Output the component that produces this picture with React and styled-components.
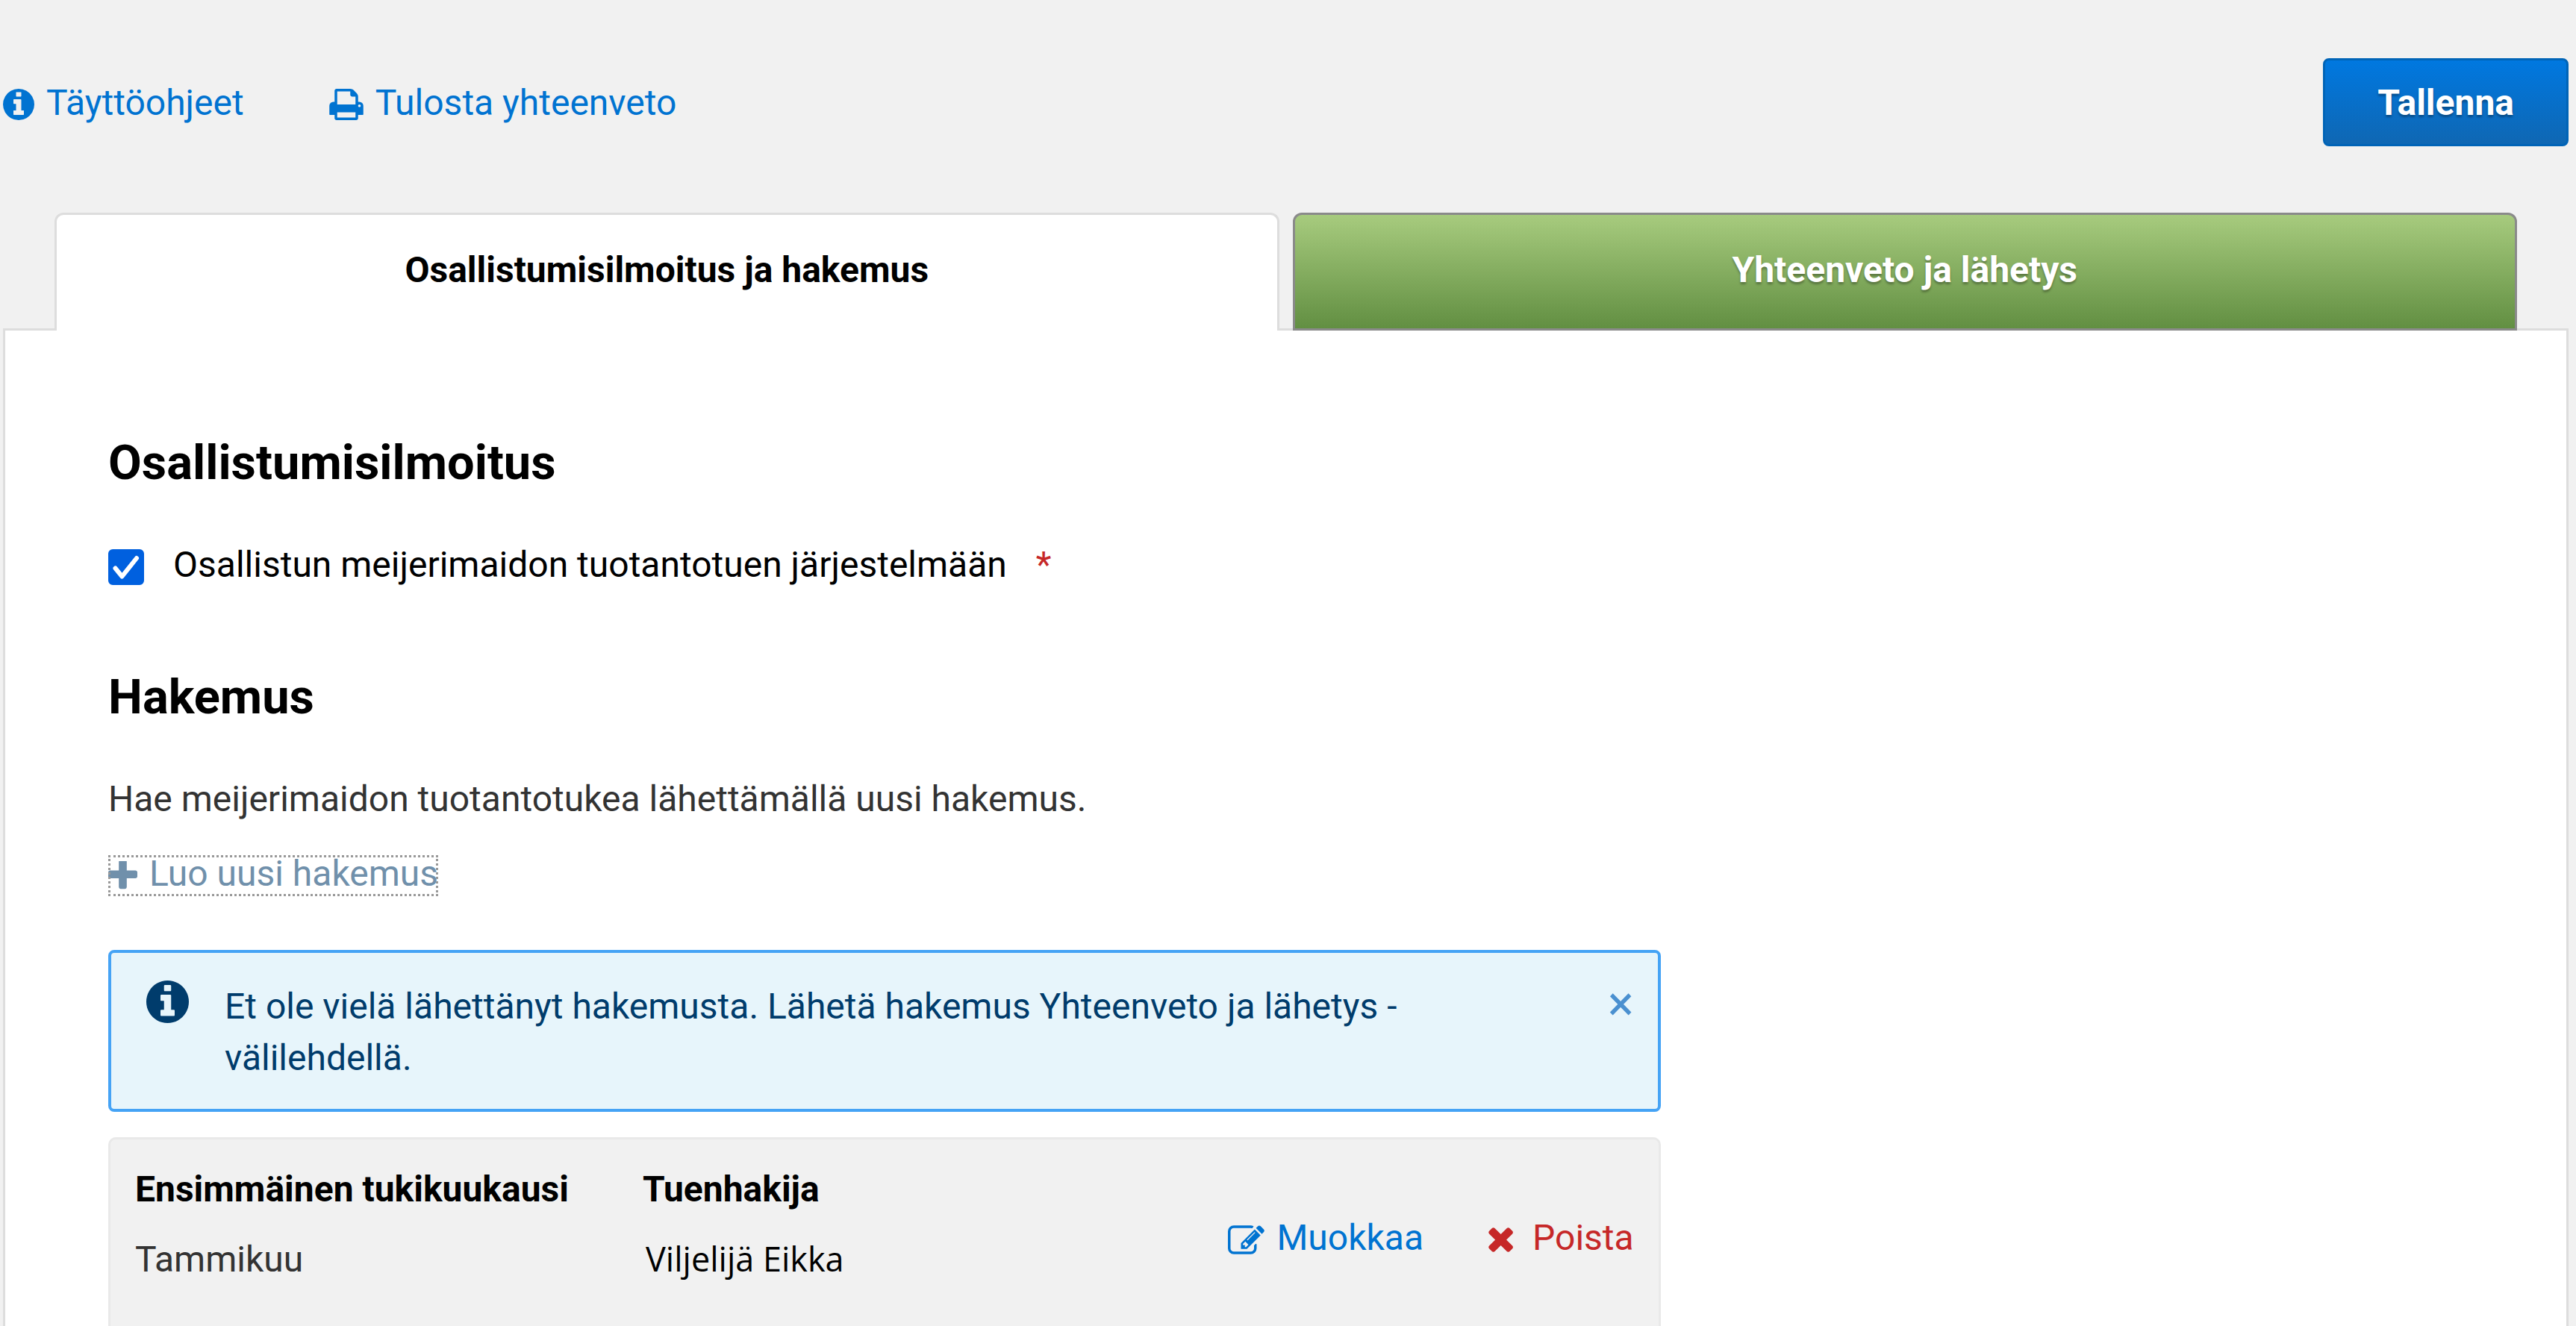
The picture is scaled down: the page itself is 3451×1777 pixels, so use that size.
import React, { useState } from 'react';
import styled, { createGlobalStyle, css } from 'styled-components';

const GlobalStyle = createGlobalStyle`
  *, *::before, *::after {
    box-sizing: border-box;
  }

  body {
    margin: 0;
    background-color: #f1f1f1;
    color: #000;
    font-family: Roboto, "Liberation Sans", sans-serif;
    font-size: 48px;
    line-height: 69px;
  }
`;

const Page = styled.div`
  display: flex;
  flex-direction: column;
  min-height: 100vh;
  padding: 78px 10px 0 4px;
`;

const TopBar = styled.header`
  display: flex;
  align-items: center;
  justify-content: space-between;
  margin-bottom: 89px;
`;

const TopLinks = styled.nav`
  display: flex;
  gap: 114px;
`;

const Svg = styled.svg`
  display: block;
  flex: none;
  width: ${props => props.$width}px;
  height: ${props => props.$height}px;
  fill: currentColor;
`;

const ActionLink = styled.a`
  display: inline-flex;
  align-items: center;
  gap: 16px;
  color: ${props => props.$danger ? '#c62828' : '#0073d1'};
  text-decoration: none;

  ${Svg} {
    margin-top: 6px;
  }
`;

const CreateLink = styled(ActionLink)`
  align-self: flex-start;
  padding-bottom: 6px;
  color: #7090ab;
  line-height: 49px;
  outline: 3px dotted #999;
  outline-offset: -3px;
`;

const SaveButton = styled.button`
  height: 118px;
  padding: 0 70px;
  border: 3px solid #0064b7;
  border-radius: 8px;
  background: linear-gradient(#0078e0, #0f67b3);
  color: #fff;
  font: inherit;
  font-weight: 700;
  text-shadow: 0 3px 3px rgba(0, 0, 0, 0.3);
`;

const Tabs = styled.div`
  display: flex;
  gap: 18px;
  margin: 0 69px -3px;
`;

const Tab = styled.button`
  position: relative;
  flex: 1;
  padding: 39px 0 44px;
  border: 3px solid #8a8a8a;
  border-radius: 12px 12px 0 0;
  background: linear-gradient(#a7cb7e, #628f42);
  color: #fff;
  font: inherit;
  font-weight: 700;
  text-shadow: 0 3px 3px rgba(0, 0, 0, 0.3);

  ${props => props.$active && css`
    padding-bottom: 47px;
    border-color: #ddd;
    border-bottom: none;
    background: #fff;
    color: #000;
    text-shadow: none;
  `}
`;

const Panel = styled.main`
  display: flex;
  flex: 1;
  flex-direction: column;
  padding: 137px 142px 0 138px;
  border: 3px solid #ddd;
  border-bottom: none;
  background-color: #fff;
`;

const Heading = styled.h2`
  margin: 0 0 62px;
  font-size: 65px;
  font-weight: 700;
  line-height: 80px;
`;

const CheckRow = styled.div`
  display: flex;
  align-items: center;
  gap: 39px;
  margin-bottom: 103px;
`;

const CheckBox = styled.input`
  appearance: none;
  width: 48px;
  height: 48px;
  margin: 6px 0 0;
  border: 3px solid #8f8f9d;
  border-radius: 6px;

  &:checked {
    border-color: #0060df;
    background: #0060df url("data:image/svg+xml,%3Csvg xmlns='http://www.w3.org/2000/svg' viewBox='0 0 42 42'%3E%3Cpath d='M6.500 22.500l9 11L35 9' fill='none' stroke='white' stroke-width='6' stroke-linecap='round' stroke-linejoin='round'/%3E%3C/svg%3E") center / 42px 42px no-repeat;
  }
`;

const Required = styled.span`
  color: #c62828;
`;

const Text = styled.p`
  margin: 0 0 41px;
  color: #333;
`;

const Notice = styled.section`
  display: flex;
  align-items: flex-start;
  width: 66%;
  margin-top: 72px;
  padding: 37px 32px 34px 47px;
  border: 4px solid #45a3f5;
  border-radius: 8px;
  background-color: #e7f5fb;
  color: #003c6c;
`;

const NoticeText = styled.p`
  flex: 1;
  margin: 0 40px 0 48px;
`;

const CloseButton = styled.button`
  padding: 0;
  border: none;
  background: none;
  color: #4a90d0;
  font: inherit;
  font-size: 65px;
  line-height: 62px;
`;

const Card = styled.section`
  display: flex;
  flex: 1;
  align-items: flex-start;
  justify-content: space-between;
  width: 66%;
  margin-top: 34px;
  padding: 32px 33px 0;
  border: 3px solid #e9e9e9;
  border-bottom: none;
  border-radius: 10px 10px 0 0;
  background-color: #f1f1f1;
`;

const Table = styled.table`
  border-collapse: collapse;
  text-align: left;

  th {
    padding: 0;
    font-weight: 700;
  }

  th:first-child {
    width: 680px;
  }

  td {
    padding: 24px 0 16px;
    color: #333;
  }
`;

const Applicant = styled.span`
  padding-left: 4px;
  color: #000;
  font-family: "Open Sans", "Noto Sans", sans-serif;
  font-size: 45px;
`;

const Actions = styled.div`
  display: flex;
  align-items: center;
  gap: 86px;
  height: 198px;
`;

// Each icon is cropped to its own box; 1792 units make one em.
const ICONS = {
  info: {
    box: [128, 128, 1536, 1536],
    d: 'M1152 1376v-160q0-14-9-23t-23-9h-96v-512q0-14-9-23t-23-9h-320q-14 0-23 9t-9 23v160q0 14 9 23t23 9h96v320h-96q-14 0-23 9t-9 23v160q0 14 9 23t23 9h448q14 0 23-9t9-23zm-128-896v-160q0-14-9-23t-23-9h-192q-14 0-23 9t-9 23v160q0 14 9 23t23 9h192q14 0 23-9t9-23zm640 416q0 209-103 385.500t-279.500 279.500-385.500 103-385.500-103-279.500-279.500-103-385.500 103-385.500 279.500-279.500 385.500-103 385.500 103 279.500 279.500 103 385.500z',
  },
  print: {
    box: [64, 128, 1664, 1536],
    d: 'M448 1536h896v-256h-896v256zm0-640h896v-384h-160q-40 0-68-28t-28-68v-160h-640v640zm1152 64q0-26-19-45t-45-19-45 19-19 45 19 45 45 19 45-19 19-45zm128 0v416q0 13-9.500 22.500t-22.500 9.500h-224v160q0 40-28 68t-68 28h-960q-40 0-68-28t-28-68v-160h-224q-13 0-22.500-9.500t-9.500-22.500v-416q0-79 56.500-135.500t135.500-56.500h64v-544q0-40 28-68t68-28h672q40 0 88 20t76 48l152 152q28 28 48 76t20 88v256h64q79 0 135.500 56.500t56.500 135.500z',
  },
  plus: {
    box: [192, 192, 1408, 1408],
    d: 'M1600 736v192q0 40-28 68t-68 28h-416v416q0 40-28 68t-68 28h-192q-40 0-68-28t-28-68v-416h-416q-40 0-68-28t-28-68v-192q0-40 28-68t68-28h416v-416q0-40 28-68t68-28h192q40 0 68 28t28 68v416h416q40 0 68 28t28 68z',
  },
  edit: {
    box: [0, 128, 1792, 1408],
    d: 'M888 1184l116-116-152-152-116 116v56h96v96h56zm440-720q-16-16-33 1l-350 350q-17 17-1 33t33-1l350-350q17-17 1-33zm80 594v190q0 119-84.500 203.500t-203.500 84.500h-832q-119 0-203.500-84.500t-84.500-203.500v-832q0-119 84.500-203.500t203.500-84.500h832q63 0 117 25 15 7 18 23 3 17-9 29l-49 49q-14 14-32 8-23-6-45-6h-832q-66 0-113 47t-47 113v832q0 66 47 113t113 47h832q66 0 113-47t47-113v-126q0-13 9-22l64-64q15-15 35-7t20 29zm-96-738l288 288-672 672h-288v-288zm444 132l-92 92-288-288 92-92q28-28 68-28t68 28l152 152q28 28 28 68t-28 68z',
  },
  times: {
    box: [256, 256, 1600, 1408],
    d: 'M1490 1322q0 40-28 68l-136 136q-28 28-68 28t-68-28l-294-294-294 294q-28 28-68 28t-68-28l-136-136q-28-28-28-68t28-68l294-294-294-294q-28-28-28-68t28-68l136-136q28-28 68-28t68 28l294 294 294-294q28-28 68-28t68 28l136 136q28 28 28 68t-28 68l-294 294 294 294q28 28 28 68z',
  },
};

const Icon = ({ name, size = 49 }) => {
  const { box, d } = ICONS[name];

  return (
    <Svg
      viewBox={box.join(' ')}
      $width={Math.round(box[2] * size / 1792)}
      $height={Math.round(box[3] * size / 1792)}
      aria-hidden="true"
    >
      <path d={d} />
    </Svg>
  );
};

const App = () => {
  const [joined, setJoined] = useState(true);
  const [noticeOpen, setNoticeOpen] = useState(true);

  return (
    <>
      <GlobalStyle />
      <Page>
        <TopBar>
          <TopLinks>
            <ActionLink href="#ohjeet"><Icon name="info" />Täyttöohjeet</ActionLink>
            <ActionLink href="#tulosta"><Icon name="print" />Tulosta yhteenveto</ActionLink>
          </TopLinks>
          <SaveButton type="button">Tallenna</SaveButton>
        </TopBar>

        <Tabs role="tablist">
          <Tab type="button" role="tab" aria-selected="true" $active>Osallistumisilmoitus ja hakemus</Tab>
          <Tab type="button" role="tab" aria-selected="false">Yhteenveto ja lähetys</Tab>
        </Tabs>

        <Panel>
          <Heading>Osallistumisilmoitus</Heading>
          <CheckRow>
            <CheckBox
              id="osallistun"
              type="checkbox"
              checked={joined}
              onChange={e => setJoined(e.target.checked)}
            />
            <label htmlFor="osallistun">Osallistun meijerimaidon tuotantotuen järjestelmään</label>
            <Required>*</Required>
          </CheckRow>

          <Heading>Hakemus</Heading>
          <Text>Hae meijerimaidon tuotantotukea lähettämällä uusi hakemus.</Text>
          <CreateLink href="#uusi"><Icon name="plus" />Luo uusi hakemus</CreateLink>

          {noticeOpen && (
            <Notice>
              <Icon name="info" size={66} />
              <NoticeText>
                Et ole vielä lähettänyt hakemusta. Lähetä hakemus Yhteenveto ja lähetys -välilehdellä.
              </NoticeText>
              <CloseButton type="button" title="Sulje" onClick={() => setNoticeOpen(false)}>×</CloseButton>
            </Notice>
          )}

          <Card>
            <Table>
              <thead>
                <tr>
                  <th>Ensimmäinen tukikuukausi</th>
                  <th>Tuenhakija</th>
                </tr>
              </thead>
              <tbody>
                <tr>
                  <td>Tammikuu</td>
                  <td><Applicant>Viljelijä Eikka</Applicant></td>
                </tr>
              </tbody>
            </Table>
            <Actions>
              <ActionLink href="#muokkaa"><Icon name="edit" />Muokkaa</ActionLink>
              <ActionLink href="#poista" $danger><Icon name="times" />Poista</ActionLink>
            </Actions>
          </Card>
        </Panel>
      </Page>
    </>
  );
};

export default App;
